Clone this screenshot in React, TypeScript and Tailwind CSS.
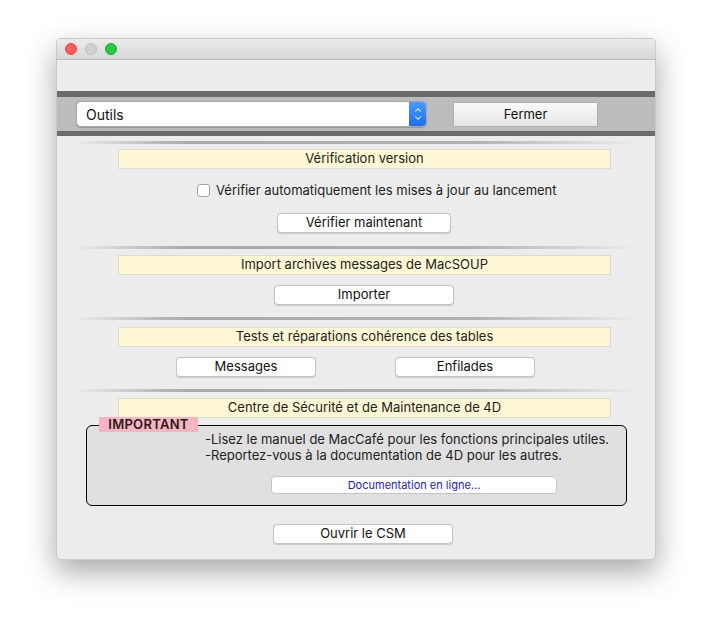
import { ChevronUp, ChevronDown } from "lucide-react"

const font = { fontFamily: "Inter, 'Noto Sans', sans-serif" }

function Separator({ className = "" }: { className?: string }) {
    return (
        <div
            className={`ml-[17px] w-[564px] h-[3px] bg-[linear-gradient(to_right,rgba(150,150,150,0),#a9a9a9_20%,#b0b0b0_70%,rgba(180,180,180,0))] ${className}`}
        />
    )
}

function Header({ children, className = "" }: { children: React.ReactNode; className?: string }) {
    return (
        <div
            className={`ml-[61px] w-[493px] h-[20px] flex items-center justify-center bg-[#fdf8d3] border border-[#dcdcd0] text-[13px] text-[#222] ${className}`}
        >
            {children}
        </div>
    )
}

function MacButton({ children, className = "" }: { children: React.ReactNode; className?: string }) {
    return (
        <button
            className={`h-[20px] flex items-center justify-center rounded-[4px] bg-white border border-[#c4c4c4] shadow-[0_0.5px_1px_rgba(0,0,0,0.15)] text-[13px] text-[#111] ${className}`}
        >
            {children}
        </button>
    )
}

export default function App() {
    return (
        <div className="w-[712px] h-[634px] bg-white pt-[38px] pl-[56px]" style={font}>
            <div className="w-[600px] h-[522px] rounded-[5px] bg-[#ececec] border border-[#c8c8c8] shadow-[0_12px_30px_rgba(0,0,0,0.35)] flex flex-col overflow-hidden">
                {/* Barre de titre */}
                <div className="h-[21px] shrink-0 flex items-center gap-[8px] pl-[8px] bg-[linear-gradient(#ebebeb,#d8d8d8)] border-b border-[#bdbdbd]">
                    <span className="w-[12px] h-[12px] rounded-full bg-[#fe5f57] border border-[#e0443e]" />
                    <span className="w-[12px] h-[12px] rounded-full bg-[#d0d0d0] border border-[#bdbdbd]" />
                    <span className="w-[12px] h-[12px] rounded-full bg-[#28c840] border border-[#1aab29]" />
                </div>

                {/* Bande outils */}
                <div className="mt-[31px] h-[45px] shrink-0 border-t-[6px] border-b-[5px] border-[#6b6b6b] bg-[#bcbcbc] flex items-center">
                    <div className="ml-[19px] w-[351px] h-[26px] flex rounded-[5px] bg-white border border-[#a8a8a8] shadow-[0_0.5px_1px_rgba(0,0,0,0.2)] overflow-hidden">
                        <div className="flex-1 flex items-center pl-[9px] text-[14px] text-[#111]">Outils</div>
                        <div className="w-[17px] flex flex-col items-center justify-center bg-[linear-gradient(#4a9bff,#1a6ff0)] text-white">
                            <ChevronUp className="w-[10px] h-[10px] -mb-[2px]" strokeWidth={2.5} />
                            <ChevronDown className="w-[10px] h-[10px]" strokeWidth={2.5} />
                        </div>
                    </div>
                    <button className="ml-[26px] w-[145px] h-[25px] flex items-center justify-center pt-[2px] bg-[linear-gradient(#fafafa,#e6e6e6)] border border-[#b0b0b0] text-[13px] text-[#111]">
                        Fermer
                    </button>
                </div>

                <Separator className="mt-[5px]" />
                <Header className="mt-[5px]">Vérification version</Header>

                <div className="mt-[15px] ml-[140px] h-[13px] leading-[13px] flex items-center gap-[6px] text-[13px] text-[#222]">
                    <span className="w-[13px] h-[13px] rounded-[3px] bg-white border border-[#a5a5a5]" />
                    Vérifier automatiquement les mises à jour au lancement
                </div>

                <MacButton className="mt-[16px] ml-[220px] w-[174px]">Vérifier maintenant</MacButton>

                <Separator className="mt-[13px]" />
                <Header className="mt-[6px]">Import archives messages de MacSOUP</Header>
                <MacButton className="mt-[10px] ml-[217px] w-[180px]">Importer</MacButton>

                <Separator className="mt-[12px]" />
                <Header className="mt-[7px]">Tests et réparations cohérence des tables</Header>
                <div className="mt-[10px] ml-[119px] flex gap-[79px]">
                    <MacButton className="w-[140px]">Messages</MacButton>
                    <MacButton className="w-[140px]">Enfilades</MacButton>
                </div>

                <Separator className="mt-[12px]" />
                <Header className="mt-[6px]">Centre de Sécurité et de Maintenance de 4D</Header>

                <div className="relative mt-[7px] ml-[29px] w-[541px] h-[81px] rounded-[6px] border border-black bg-[#e0e0e0]">
                    <div className="absolute left-[12px] -top-[9px] w-[99px] h-[15px] bg-[#f6b5c1] flex items-center justify-center text-[13px] font-semibold tracking-[0.3px] text-[#2a1a1a]">
                        IMPORTANT
                    </div>
                    <div className="pt-[5px] pl-[118px] text-[13px] leading-[16px] text-[#222]">
                        <div>-Lisez le manuel de MacCafé pour les fonctions principales utiles.</div>
                        <div>-Reportez-vous à la documentation de 4D pour les autres.</div>
                    </div>
                    <button className="mt-[13px] ml-[184px] w-[286px] h-[18px] flex items-center justify-center rounded-[4px] bg-white border border-[#c4c4c4] text-[11px] text-[#1a1acc]">
                        Documentation en ligne...
                    </button>
                </div>

                <MacButton className="mt-[18px] ml-[216px] w-[180px]">Ouvrir le CSM</MacButton>
            </div>
        </div>
    )
}
